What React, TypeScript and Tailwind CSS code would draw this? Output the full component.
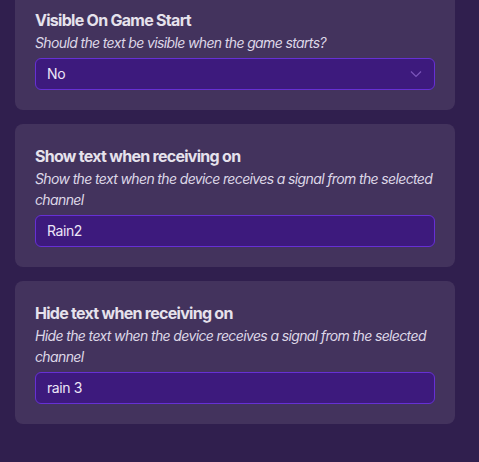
import React from "react"

const fields = [
  {
    title: "Visible On Game Start",
    hint: "Should the text be visible when the game starts?",
    value: "No",
    select: true,
  },
  {
    title: "Show text when receiving on",
    hint: "Show the text when the device receives a signal from the selected channel",
    value: "Rain2",
  },
  {
    title: "Hide text when receiving on",
    hint: "Hide the text when the device receives a signal from the selected channel",
    value: "rain 3",
  },
]

export default function App() {
  return (
    <div className="h-[462px] w-[479px] overflow-hidden bg-[#301f4e] font-['Inter',sans-serif]">
      <div className="mt-[-12px] ml-[15px] flex w-[440px] flex-col gap-[14px]">
        {fields.map((f, i) => (
          <div key={i} className="rounded-lg bg-[#43335d] px-5 pt-5 pb-[20px]">
            <div className="text-base font-bold leading-6 tracking-[-0.045em] text-[#e6e2ec]">{f.title}</div>
            <div className="text-sm italic leading-[21px] tracking-[-0.045em] text-[#ddd7e7]">{f.hint}</div>
            <div className="mt-[5px] flex h-8 items-center justify-between rounded-md border border-[#6630d4] bg-[#3d1a7d] px-[11px] text-sm tracking-[-0.03em] text-[#ece6f7]">
              <span>{f.value}</span>
              {f.select && (
                <svg width="12" height="8" viewBox="0 0 12 8" fill="none" className="mr-[1px]">
                  <path d="M1 1.5 L6 6.5 L11 1.5" stroke="#7b56bb" strokeWidth="1.2" />
                </svg>
              )}
            </div>
          </div>
        ))}
      </div>
    </div>
  )
}
